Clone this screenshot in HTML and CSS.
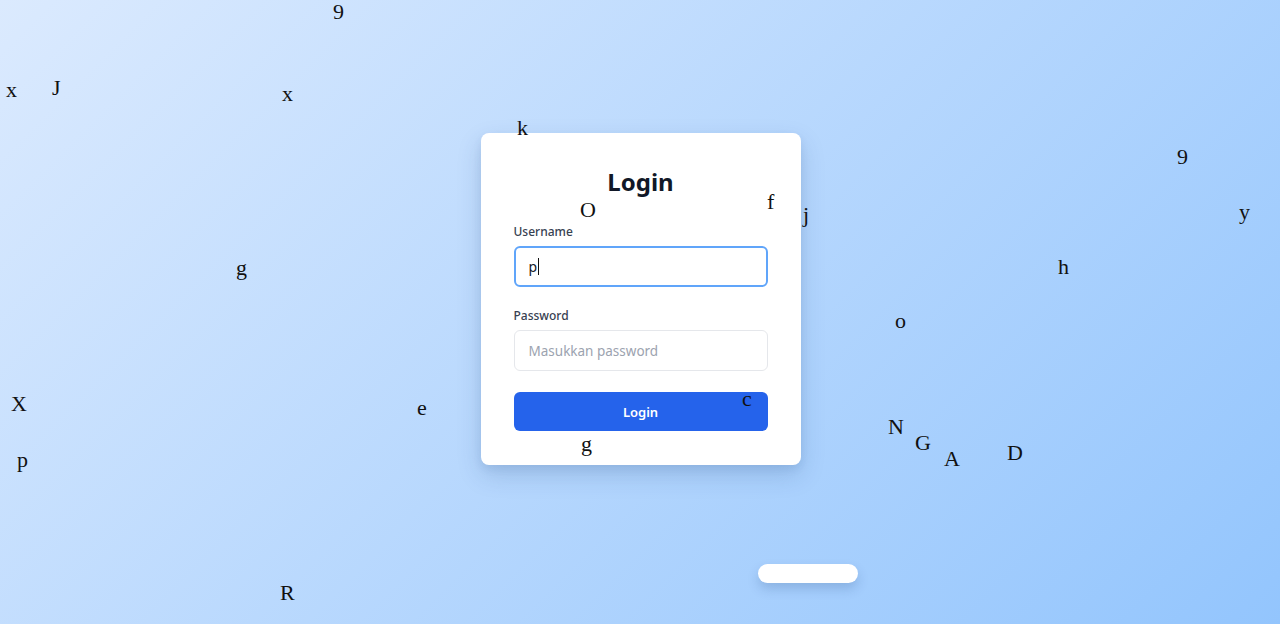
FILE: index.html
```html
<!DOCTYPE html>
<html lang="id">
<head>
<meta charset="utf-8">
<title>Login</title>
<link rel="stylesheet" href="styles.css">
</head>
<body>
<main class="stage">
  <form class="card">
    <h1 class="title">Login</h1>
    <div class="field">
      <label class="label">Username</label>
      <div class="input input-focus">p<span class="caret"></span></div>
    </div>
    <div class="field">
      <label class="label">Password</label>
      <div class="input placeholder">Masukkan password</div>
    </div>
    <button type="button" class="btn">Login</button>
  </form>
  <div class="pill"></div>

  <div class="letters">
    <span class="ch" style="left:333px;top:1px">9</span>
    <span class="ch" style="left:6px;top:79px">x</span>
    <span class="ch" style="left:52px;top:77px">J</span>
    <span class="ch" style="left:282px;top:83px">x</span>
    <span class="ch" style="left:517px;top:117px">k</span>
    <span class="ch" style="left:1177px;top:146px">9</span>
    <span class="ch" style="left:580px;top:199px">O</span>
    <span class="ch" style="left:767px;top:191px">f</span>
    <span class="ch" style="left:803px;top:204px">j</span>
    <span class="ch" style="left:1239px;top:201px">y</span>
    <span class="ch" style="left:236px;top:257px">g</span>
    <span class="ch" style="left:1058px;top:256px">h</span>
    <span class="ch" style="left:895px;top:310px">o</span>
    <span class="ch" style="left:11px;top:393px">X</span>
    <span class="ch" style="left:417px;top:397px">e</span>
    <span class="ch" style="left:742px;top:388px">c</span>
    <span class="ch" style="left:888px;top:416px">N</span>
    <span class="ch" style="left:915px;top:432px">G</span>
    <span class="ch" style="left:944px;top:448px">A</span>
    <span class="ch" style="left:1007px;top:442px">D</span>
    <span class="ch" style="left:17px;top:449px">p</span>
    <span class="ch" style="left:581px;top:433px">g</span>
    <span class="ch" style="left:280px;top:582px">R</span>
  </div>
</main>
</body>
</html>
```

FILE: styles.css
```css
* { box-sizing: border-box; }
html, body { margin: 0; padding: 0; }
body {
  width: 1280px;
  height: 624px;
  overflow: hidden;
  font-family: "Noto Sans", "Open Sans", sans-serif;
}
.stage {
  position: relative;
  width: 1280px;
  height: 624px;
  background: linear-gradient(135deg, #dbeafe 0%, #93c5fd 100%);
  display: flex;
  flex-direction: column;
  align-items: center;
  padding-top: 133px;
}
.card {
  width: 320px;
  height: 332px;
  margin-left: 1px;
  background: #fff;
  border-radius: 8px;
  box-shadow: 0 10px 25px rgba(30, 64, 120, 0.18), 0 4px 8px rgba(30, 64, 120, 0.08);
  padding: 33px 33px 0 33px;
  display: flex;
  flex-direction: column;
}
.title {
  margin: 0;
  text-align: center;
  font-size: 24px;
  font-weight: 700;
  line-height: 32px;
  color: #111827;
  margin-bottom: 26px;
}
.field {
  display: flex;
  flex-direction: column;
  margin-bottom: 21px;
}
.label {
  font-size: 12px;
  font-weight: 500;
  color: #374151;
  line-height: 16px;
  margin-bottom: 6px;
}
.input {
  height: 41px;
  border: 1px solid #e5e7eb;
  border-radius: 6px;
  padding: 0 14px;
  display: flex;
  align-items: center;
  font-size: 13px;
  color: #111827;
}
.input-focus {
  border: 2px solid #60a5fa;
  padding: 0 13px;
  font-size: 14px;
}
.caret {
  display: inline-block;
  width: 1px;
  height: 17px;
  background: #111;
  margin-left: 1px;
}
.placeholder { color: #9ca3af; font-size: 13.5px; }
.btn {
  height: 39px;
  margin-top: 0;
  border: none;
  border-radius: 6px;
  background: #2563eb;
  color: #fff;
  font-family: inherit;
  font-size: 13px;
  font-weight: 600;
}
.pill {
  width: 100px;
  height: 19px;
  margin-top: 99px;
  margin-left: 335px;
  background: #fff;
  border-radius: 10px;
  box-shadow: 0 6px 12px rgba(30, 64, 120, 0.2);
}
.letters { position: absolute; inset: 0; pointer-events: none; }
.ch {
  position: absolute;
  font-family: "Liberation Serif", "Times New Roman", serif;
  font-size: 22px;
  line-height: 22px;
  color: #111;
}
```
